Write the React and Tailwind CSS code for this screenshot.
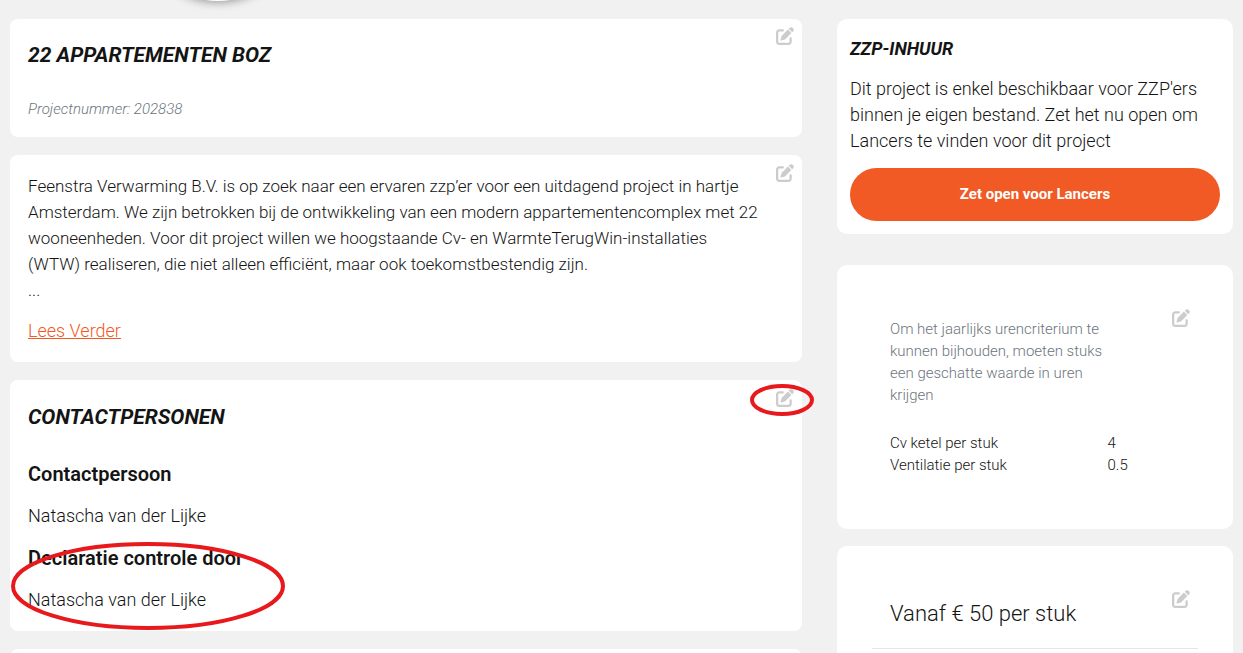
import React from "react";
import { FaPenToSquare } from "react-icons/fa6";

function EditButton({ label, className }) {
  return (
    <button
      type="button"
      aria-label={label}
      className={`absolute text-[#cccccc] ${className}`}
    >
      <FaPenToSquare className="size-[18px]" aria-hidden="true" />
    </button>
  );
}

function Card({ className = "", children }) {
  return <section className={`relative bg-white ${className}`}>{children}</section>;
}

function Marker({ className, width, height }) {
  return (
    <svg
      className={`pointer-events-none absolute ${className}`}
      width={width}
      height={height}
      viewBox={`0 0 ${width} ${height}`}
      fill="none"
      stroke="#e8191c"
      strokeWidth="4"
      aria-hidden="true"
    >
      <ellipse cx={width / 2} cy={height / 2} rx={width / 2 - 3} ry={height / 2 - 3} />
    </svg>
  );
}

const estimates = [
  { name: "Cv ketel per stuk", value: "4" },
  { name: "Ventilatie per stuk", value: "0.5" },
];

export default function App() {
  return (
    <div className="h-screen overflow-hidden bg-[#f1f1f1] font-['Roboto',sans-serif] font-light text-[#141414]">
      <header className="relative h-[19px]">
        <div className="absolute bottom-[18px] left-[138px] size-[160px] rounded-full bg-white shadow-[0_1px_10px_rgba(0,0,0,0.4)]" />
      </header>

      <main className="grid grid-cols-[2fr_1fr] items-start gap-[35px] px-[10px]">
        <div className="flex flex-col gap-[18px]">
          <Card className="rounded-lg px-[18px] pt-[21px] pb-[16px]">
            <EditButton label="Titel bewerken" className="top-[8px] right-[8px]" />
            <h1 className="text-[21px] leading-[30px] font-bold italic">22 APPARTEMENTEN BOZ</h1>
            <p className="mt-[27px] text-[15px] leading-[24px] text-[#6c757d] italic">
              Projectnummer: 202838
            </p>
          </Card>

          <Card className="rounded-lg px-[18px] pt-[18px] pb-[18px]">
            <EditButton label="Omschrijving bewerken" className="top-[9px] right-[8px]" />
            <p className="text-[17px] leading-[26px]">
              Feenstra Verwarming B.V. is op zoek naar een ervaren zzp’er voor een uitdagend project in hartje
              Amsterdam. We zijn betrokken bij de ontwikkeling van een modern appartementencomplex met 22
              wooneenheden. Voor dit project willen we hoogstaande Cv- en WarmteTerugWin-installaties
              <br />
              (WTW) realiseren, die niet alleen efficiënt, maar ook toekomstbestendig zijn.
              <br />
              ...
            </p>
            <p className="mt-[15px] text-[18px] leading-[26px]">
              <a href="#omschrijving" className="text-[#f15a24] underline">
                Lees Verder
              </a>
            </p>
          </Card>

          <Card className="rounded-lg px-[18px] pt-[22px] pb-[18px]">
            <EditButton label="Contactpersonen bewerken" className="top-[9px] right-[8px]" />
            <h2 className="text-[21px] leading-[30px] font-bold italic">CONTACTPERSONEN</h2>
            <h3 className="mt-[28px] text-[20px] leading-[28px] font-semibold">Contactpersoon</h3>
            <p className="mt-[15px] text-[18px] leading-[26px]">Natascha van der Lijke</p>
            <h3 className="mt-[15px] text-[20px] leading-[28px] font-semibold">Declaratie controle door</h3>
            <p className="mt-[15px] text-[18px] leading-[26px]">Natascha van der Lijke</p>
            <Marker className="top-[3px] right-[-13px]" width={66} height={34} />
            <Marker className="top-[161px] left-0" width={276} height={90} />
          </Card>

          <Card className="h-[120px] rounded-lg" />
        </div>

        <div className="flex flex-col">
          <Card className="rounded-[10px] px-[13px] pt-[17px] pb-[13px]">
            <h2 className="text-[18px] leading-[26px] font-bold italic">ZZP-INHUUR</h2>
            <p className="mt-[14px] text-[18px] leading-[26px]">
              Dit project is enkel beschikbaar voor ZZP'ers binnen je eigen bestand. Zet het nu open om
              Lancers te vinden voor dit project
            </p>
            <button
              type="button"
              className="mt-[14px] h-[53px] w-full rounded-full bg-[#f15a24] text-[15px] font-bold text-white"
            >
              Zet open voor Lancers
            </button>
          </Card>

          <Card className="mt-[31px] rounded-[10px] px-[53px] pt-[53px] pb-[53px]">
            <EditButton label="Geschatte waarden bewerken" className="top-[44px] right-[43px]" />
            <p className="mr-[60px] text-[15px] leading-[22px] text-[#6c757d]">
              Om het jaarlijks urencriterium te kunnen bijhouden, moeten stuks een geschatte waarde in uren
              krijgen
            </p>
            <table className="mt-[26px] w-full table-fixed text-left text-[15px] leading-[22px]">
              <tbody>
                {estimates.map((item) => (
                  <tr key={item.name}>
                    <th scope="row" className="w-3/4 font-light">
                      {item.name}
                    </th>
                    <td>{item.value}</td>
                  </tr>
                ))}
              </tbody>
            </table>
          </Card>

          <Card className="mt-[17px] rounded-[10px] px-[35px] pt-[51px] pb-[35px]">
            <EditButton label="Tarief bewerken" className="top-[44px] right-[43px]" />
            <p className="border-b border-[#e5e5e5] px-[18px] pb-[18px] text-[22px] leading-[33px]">
              Vanaf € 50 per stuk
            </p>
          </Card>
        </div>
      </main>
    </div>
  );
}
